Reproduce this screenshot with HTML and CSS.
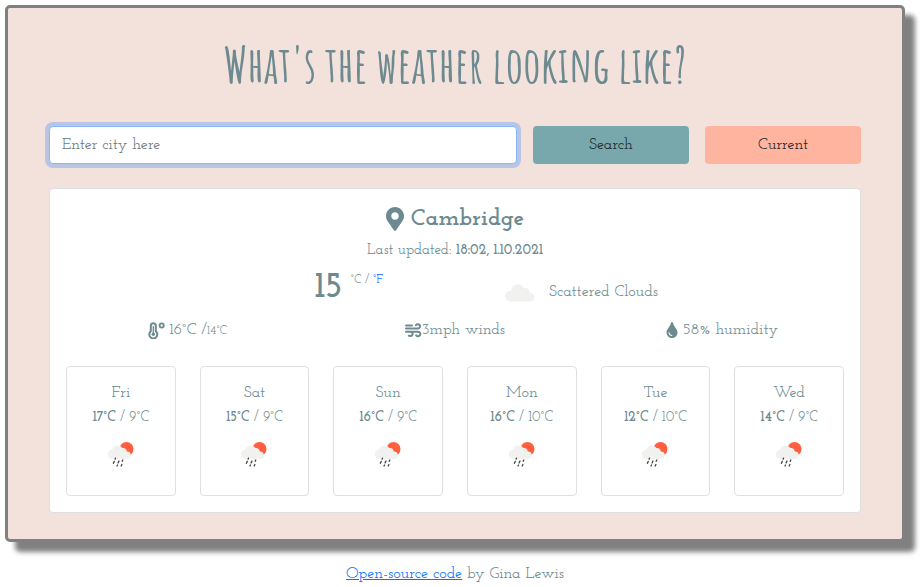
FILE: index.html
```
<!DOCTYPE html>
<html lang="en">
<head>
<meta charset="utf-8">
<meta name="viewport" content="width=device-width, initial-scale=1">
<title>Weather</title>
<link rel="stylesheet" href="styles.css">
</head>
<body>
<svg class="sprite" aria-hidden="true">
  <symbol id="rain" viewBox="0 0 28 28">
    <circle cx="19.5" cy="8" r="7" fill="#ff5f3f"/>
    <path d="M5.500 18a4.700 4.700 0 0 1-.2-9.400A5.700 5.700 0 0 1 15.500 7a3.800 3.800 0 0 1 4.300 3.500 3.800 3.800 0 0 1 1 7.500z" fill="#f1f1f0"/>
    <path d="M8.500 17.200l-.4 1M15.800 19l-.6 1.300M7.300 20.400l-.9 1.900M12 20l-.9 1.900M10.500 24l-.5 1M14.900 23.500l-.7 1.500" stroke="#444" stroke-width="1.300" stroke-linecap="round"/>
  </symbol>
</svg>
<main class="app">
  <h1 class="title">What's the weather looking like?</h1>
  <form class="search">
    <input class="city-input" type="text" placeholder="Enter city here" aria-label="City">
    <button class="button button-search" type="submit">Search</button>
    <button class="button button-current" type="button">Current</button>
  </form>
  <section class="panel">
    <h2 class="city">
      <svg class="pin" viewBox="0 0 384 512" fill="currentColor" aria-hidden="true"><path d="M172.268 501.67C26.97 291.031 0 269.413 0 192 0 85.961 85.961 0 192 0s192 85.961 192 192c0 77.413-26.97 99.031-172.268 309.67-9.535 13.774-29.93 13.773-39.464 0zM192 272c44.183 0 80-35.817 80-80s-35.817-80-80-80-80 35.817-80 80 35.817 80 80 80z"/></svg>
      <span>Cambridge</span>
    </h2>
    <p class="updated">Last updated: <strong>18:02, 1.10.2021</strong></p>
    <div class="now">
      <div class="temperature">
        <strong class="degrees">15</strong>
        <span class="units">°C / <a href="#">°F</a></span>
      </div>
      <div class="conditions">
        <svg class="cloud" viewBox="0 0 30 19" aria-hidden="true"><path d="M5.500 18.500a5.400 5.400 0 0 1 0-10.800h.8A6.500 6.500 0 0 1 18.700 5a4.500 4.500 0 0 1 5.700 5.200 4.200 4.200 0 1 1 1 8.300z" fill="#f1f1f0"/></svg>
        <span>Scattered Clouds</span>
      </div>
    </div>
    <div class="details">
      <p class="detail">
        <svg class="thermometer" viewBox="0 0 17 17" fill="none" stroke="currentColor" aria-hidden="true"><path d="M2.800 9.300V3.800a2.500 2.500 0 0 1 5 0v5.500a4 4 0 1 1-5 0z" stroke-width="2"/><path d="M5.300 4v8" stroke-width="1.300"/><circle cx="5.300" cy="12.300" r="1.700" fill="currentColor" stroke="none"/><circle cx="13.700" cy="3.500" r="2.100" stroke-width="1.800"/></svg>
        <span>16°C /<small>14°C</small></span>
      </p>
      <p class="detail detail-wind">
        <svg class="wind" viewBox="0 0 17 15" fill="none" stroke="currentColor" stroke-width="2" stroke-linecap="round" aria-hidden="true"><path d="M1 5.500h12.200A2.200 2.200 0 1 0 11 2.100M1 8.700h12.200a2.300 2.300 0 1 1-2 3.700M1 2.500h6M3.800 12.700h.7a2 2 0 0 0 2-3.500"/></svg>
        <span>3mph winds</span>
      </p>
      <p class="detail">
        <svg class="drop" viewBox="0 0 352 512" fill="currentColor" aria-hidden="true"><path d="M205.22 22.09c-7.94-28.78-49.44-30.12-58.44 0C100.01 179.85 0 222.72 0 333.91 0 432.35 78.72 512 176 512s176-79.65 176-178.09c0-111.75-99.79-153.34-146.78-311.82zM176 448c-61.75 0-112-50.25-112-112 0-8.84 7.16-16 16-16s16 7.16 16 16c0 44.11 35.89 80 80 80 8.84 0 16 7.16 16 16s-7.16 16-16 16z"/></svg>
        <span>58% humidity</span>
      </p>
    </div>
    <div class="forecast">
      <article class="day"><h3>Fri</h3><p><strong>17°C</strong> / 9°C</p><svg class="rain" aria-hidden="true"><use href="#rain"/></svg></article>
      <article class="day"><h3>Sat</h3><p><strong>15°C</strong> / 9°C</p><svg class="rain" aria-hidden="true"><use href="#rain"/></svg></article>
      <article class="day"><h3>Sun</h3><p><strong>16°C</strong> / 9°C</p><svg class="rain" aria-hidden="true"><use href="#rain"/></svg></article>
      <article class="day"><h3>Mon</h3><p><strong>16°C</strong> / 10°C</p><svg class="rain" aria-hidden="true"><use href="#rain"/></svg></article>
      <article class="day"><h3>Tue</h3><p><strong>12°C</strong> / 10°C</p><svg class="rain" aria-hidden="true"><use href="#rain"/></svg></article>
      <article class="day"><h3>Wed</h3><p><strong>14°C</strong> / 9°C</p><svg class="rain" aria-hidden="true"><use href="#rain"/></svg></article>
    </div>
  </section>
</main>
<footer class="footer"><a href="#">Open-source code</a> by Gina Lewis</footer>
</body>
</html>
```
FILE: styles.css
```
* {
  box-sizing: border-box;
}

body {
  margin: 0;
  padding: 5px 15px 0 5px;
  background: #fff;
  color: #6c8a90;
  font-family: "Josefin Slab", "Liberation Serif", serif;
  font-size: 16px;
  font-weight: 500;
  line-height: 24px;
}

h1, h2, h3, p {
  margin: 0;
}

a {
  color: #0d6efd;
}

.sprite {
  display: none;
}

.app {
  padding: 24px 41px 26px;
  border: 3px solid #808080;
  border-radius: 5px;
  background: #f3e2dc;
  box-shadow: 10px 10px 5px #808080;
}

.title {
  margin-bottom: 30px;
  font-family: "Amatic SC", "Liberation Sans Narrow", "DejaVu Sans Condensed", sans-serif;
  font-size: 49px;
  font-weight: 700;
  line-height: 64px;
  text-align: center;
}

.search {
  display: grid;
  grid-template-columns: 3fr 1fr 1fr;
  gap: 16px;
  margin-bottom: 24px;
}

.city-input,
.button {
  height: 38px;
  min-width: 0;
  border: 0;
  border-radius: 4px;
  font: inherit;
  color: #212529;
}

.city-input {
  padding: 0 12px;
  border: 1px solid #86b7fe;
  background: #fff;
  outline: none;
  box-shadow: 0 0 0 4px rgba(13, 110, 253, 0.25);
}

.city-input::placeholder {
  color: #6c757d;
  opacity: 1;
}

.button-search {
  background: #78a8ac;
}

.button-current {
  background: #ffb4a0;
}

.panel {
  padding: 16px;
  border: 1px solid #dfdfdf;
  border-radius: 4px;
  background: #fff;
}

.city {
  display: flex;
  align-items: center;
  justify-content: center;
  gap: 7px;
  font-size: 24px;
  line-height: 28px;
}

.pin {
  width: 18px;
  height: 24px;
}

.updated {
  margin-top: 6px;
  font-size: 15px;
  text-align: center;
}

.updated strong {
  font-size: 14px;
}

.now {
  display: grid;
  grid-template-columns: 41% 1fr;
  align-items: center;
  height: 50px;
}

.temperature {
  display: flex;
  justify-content: flex-end;
  gap: 8px;
  padding-right: 2px;
}

.degrees {
  font-size: 36px;
  line-height: 40px;
}

.units {
  font-size: 12px;
}

.units a {
  text-decoration: none;
}

.conditions {
  display: flex;
  align-items: center;
  gap: 14px;
  padding: 8px 0 0 120px;
}

.cloud {
  width: 30px;
  height: 19px;
}

.details,
.forecast {
  display: grid;
  gap: 24px;
}

.details {
  grid-template-columns: repeat(3, 1fr);
  margin: 5px 0 24px;
}

.detail {
  display: flex;
  align-items: center;
  justify-content: center;
  gap: 4px;
}

.detail-wind {
  gap: 0;
}

.detail small {
  font-size: 12px;
  line-height: 12px;
}

.thermometer {
  width: 17px;
  height: 17px;
}

.wind {
  width: 17px;
  height: 15px;
}

.drop {
  width: 12px;
  height: 16px;
}

.forecast {
  grid-template-columns: repeat(6, 1fr);
}

.day {
  padding: 14px 0 26px;
  border: 1px solid #dfdfdf;
  border-radius: 4px;
  text-align: center;
}

.day h3 {
  font-size: 16px;
  font-weight: 500;
  line-height: 24px;
}

.day p {
  font-size: 14px;
  line-height: 26px;
}

.rain {
  display: block;
  width: 28px;
  height: 28px;
  margin: 10px auto 0;
}

.footer {
  margin-top: 20px;
  text-align: center;
}
```
